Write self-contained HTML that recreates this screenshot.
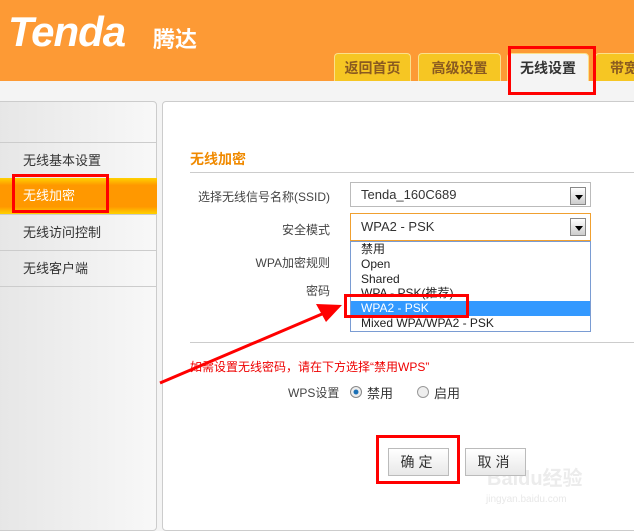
<!DOCTYPE html><html><head><meta charset="utf-8"><style>
*{margin:0;padding:0;box-sizing:border-box}
body{width:634px;height:519px;overflow:hidden;background:#f4f4f4;font-family:"Liberation Sans","Noto Sans CJK SC",sans-serif;font-size:12px;color:#333;position:relative}
.a{position:absolute}
.hdr{left:0;top:0;width:634px;height:81px;background:#fd9a35}
.tab{top:53px;height:28px;background:#f6c623;border:1px solid #fbe08a;border-bottom:none;border-radius:4px 4px 0 0;color:#8a5a20;font-size:14px;font-weight:bold;text-align:center;line-height:28px}
.side{left:-5px;top:101px;width:162px;height:430px;background:linear-gradient(90deg,#e6e6e6,#f8f8f8);border:1px solid #ccc;border-radius:4px}
.it{left:0;width:157px;height:36px;border-top:1px solid #ccc;line-height:36px;padding-left:23px;font-size:13px}
.main{left:162px;top:101px;width:480px;height:430px;background:#fff;border:1px solid #ccc;border-radius:4px}
.lab{font-size:12px;color:#444;text-align:right;width:150px}
.sel{left:350px;width:241px;background:#fff;border:1px solid #bbb;font-size:13px;padding-left:10px}
.arr{position:absolute;right:4px;top:4px;width:16px;height:18px;border:1px solid #888;background:linear-gradient(#fff,#ccc)}
.arr:after{content:"";position:absolute;left:4px;top:7px;border:4px solid transparent;border-top:5px solid #000;border-bottom:0}
.rb{border:3px solid #f00}
.btn{top:448px;width:61px;height:28px;border:1px solid #bbb;background:linear-gradient(#fff,#e8e8e8);font-size:14px;text-align:center;line-height:27px;letter-spacing:4px}
</style></head><body>
<div class="a hdr"></div>
<div class="a" style="left:8px;top:8px;color:#fff;font-size:42px;font-style:italic;font-weight:bold;letter-spacing:-1px">Tenda</div>
<div class="a" style="left:153px;top:22px;color:#fff;font-size:22px;font-weight:bold">腾达</div>
<div class="a tab" style="left:334px;width:77px">返回首页</div>
<div class="a tab" style="left:418px;width:83px">高级设置</div>
<div class="a tab" style="left:507px;width:82px;background:#f4f4f4;color:#333">无线设置</div>
<div class="a tab" style="left:595px;width:45px;text-align:left;padding-left:14px">带宽</div>
<div class="a rb" style="left:508px;top:46px;width:88px;height:49px"></div>
<div class="a side"></div>
<div class="a it" style="top:142px">无线基本设置</div>
<div class="a it" style="top:178px;background:linear-gradient(#ffd200,#ff9800 20%,#ff9800 80%,#ffd200);color:#fff;border-top:none">无线加密</div>
<div class="a it" style="top:214px">无线访问控制</div>
<div class="a it" style="top:250px">无线客户端</div>
<div class="a it" style="top:286px;height:1px"></div>
<div class="a rb" style="left:12px;top:174px;width:97px;height:39px"></div>
<div class="a main"></div>
<div class="a" style="left:190px;top:149px;color:#f08a00;font-size:14px;font-weight:bold">无线加密</div>
<div class="a" style="left:190px;top:172px;width:444px;height:1px;background:#ccc"></div>
<div class="a lab" style="left:180px;top:188px">选择无线信号名称(SSID)</div>
<div class="a sel" style="top:182px;height:25px;line-height:23px">Tenda_160C689<span class="arr"></span></div>
<div class="a lab" style="left:180px;top:221px">安全模式</div>
<div class="a sel" style="top:213px;height:28px;line-height:26px;border-color:#f0a030">WPA2 - PSK<span class="arr"></span></div>
<div class="a lab" style="left:180px;top:254px">WPA加密规则</div>
<div class="a lab" style="left:180px;top:282px">密码</div>
<div class="a" style="left:350px;top:241px;width:241px;height:91px;background:#fff;border:1px solid #7a9cd3;font-size:12px;line-height:14.8px;color:#222">
<div style="padding-left:10px">禁用</div><div style="padding-left:10px">Open</div><div style="padding-left:10px">Shared</div><div style="padding-left:10px">WPA - PSK(推荐)</div><div style="padding-left:10px;background:#3399ff;color:#fff">WPA2 - PSK</div><div style="padding-left:10px">Mixed WPA/WPA2 - PSK</div></div>
<div class="a rb" style="left:344px;top:294px;width:125px;height:24px"></div>
<div class="a" style="left:190px;top:342px;width:444px;height:1px;background:#ccc"></div>
<div class="a" style="left:190px;top:358px;color:#e00;font-size:12px">如需设置无线密码，请在下方选择“禁用WPS”</div>
<div class="a" style="left:288px;top:384px;color:#444">WPS设置</div>
<div class="a" style="left:350px;top:386px;width:12px;height:12px;border-radius:50%;border:1px solid #888;background:radial-gradient(#1a6fb5 30%,#eee 40%)"></div>
<div class="a" style="left:367px;top:383px;font-size:13px">禁用</div>
<div class="a" style="left:417px;top:386px;width:12px;height:12px;border-radius:50%;border:1px solid #999;background:#eee"></div>
<div class="a" style="left:434px;top:383px;font-size:13px">启用</div>
<div class="a" style="left:487px;top:462px;color:#ececec;font-size:20px;font-weight:bold">Baidu经验</div>
<div class="a" style="left:486px;top:494px;color:#e8e8e8;font-size:10px">jingyan.baidu.com</div>
<div class="a btn" style="left:388px">确定</div>
<div class="a btn" style="left:465px">取消</div>
<div class="a rb" style="left:376px;top:435px;width:84px;height:49px"></div>
<svg class="a" style="left:0;top:0" width="634" height="519"><line x1="160" y1="383" x2="322" y2="314" stroke="#f00" stroke-width="3"/><polygon points="342,305 316,304 326,322" fill="#f00"/></svg>
</body></html>
